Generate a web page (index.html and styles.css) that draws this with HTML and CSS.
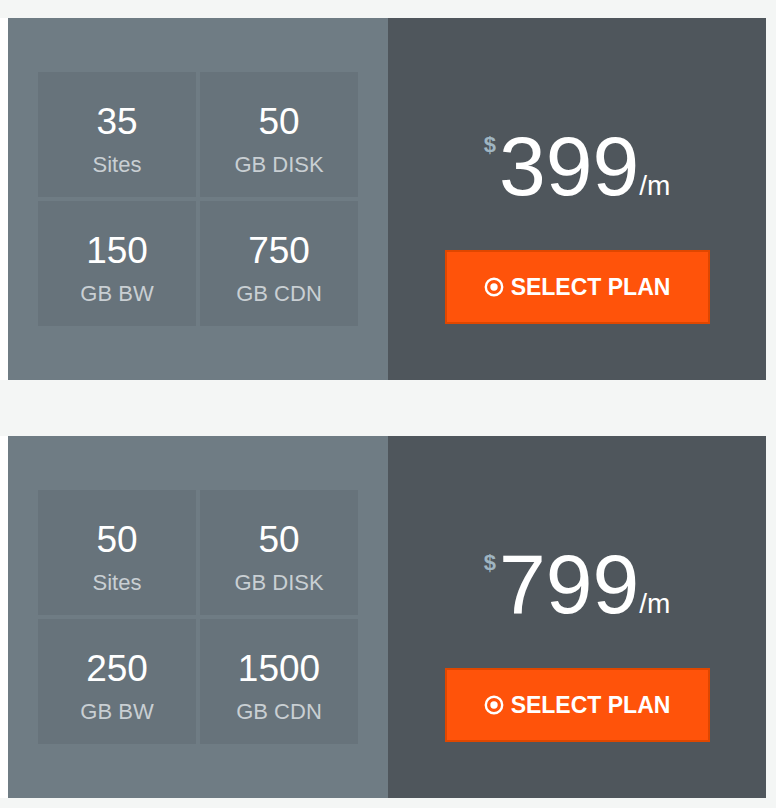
FILE: index.html
```html
<!DOCTYPE html>
<html>
<head>
<meta charset="utf-8">
<link rel="stylesheet" href="styles.css">
</head>
<body>
<div class="plans">
  <div class="plan">
    <div class="specs">
      <div class="cell"><div class="num">35</div><div class="label">Sites</div></div>
      <div class="cell"><div class="num">50</div><div class="label">GB DISK</div></div>
      <div class="cell"><div class="num">150</div><div class="label">GB BW</div></div>
      <div class="cell"><div class="num">750</div><div class="label">GB CDN</div></div>
    </div>
    <div class="pricing">
      <div class="price"><span class="cur">$</span>399<span class="per">/m</span></div>
      <button class="select"><svg class="ico" viewBox="0 0 20 20" width="20" height="20"><circle cx="10" cy="10" r="8.2" fill="none" stroke="#fff" stroke-width="2.4"/><circle cx="10" cy="10" r="3.7" fill="#fff"/></svg><span>SELECT PLAN</span></button>
    </div>
  </div>
  <div class="plan">
    <div class="specs">
      <div class="cell"><div class="num">50</div><div class="label">Sites</div></div>
      <div class="cell"><div class="num">50</div><div class="label">GB DISK</div></div>
      <div class="cell"><div class="num">250</div><div class="label">GB BW</div></div>
      <div class="cell"><div class="num">1500</div><div class="label">GB CDN</div></div>
    </div>
    <div class="pricing">
      <div class="price"><span class="cur">$</span>799<span class="per">/m</span></div>
      <button class="select"><svg class="ico" viewBox="0 0 20 20" width="20" height="20"><circle cx="10" cy="10" r="8.2" fill="none" stroke="#fff" stroke-width="2.4"/><circle cx="10" cy="10" r="3.7" fill="#fff"/></svg><span>SELECT PLAN</span></button>
    </div>
  </div>
</div>
</body>
</html>
```
FILE: styles.css
```css
html, body {
  margin: 0;
  padding: 0;
}
body {
  background: #f4f6f5;
  font-family: "Liberation Sans", Arial, Helvetica, sans-serif;
  height: 808px;
  overflow: hidden;
}
.plans {
  display: flex;
  flex-direction: column;
  gap: 56px;
  padding-top: 18px;
}
.plan {
  display: flex;
  width: 758px;
  height: 362px;
  padding-left: 8px;
  background: #ffffff;
}
.specs {
  width: 320px;
  padding: 54px 30px;
  background: #6f7c84;
  display: grid;
  grid-template-columns: 158px 158px;
  grid-template-rows: 125px 125px;
  gap: 4px;
}
.cell {
  background: #67737b;
  text-align: center;
  padding-top: 30px;
  box-sizing: border-box;
}
.num {
  color: #ffffff;
  font-size: 37px;
  line-height: 40px;
}
.label {
  color: #c9cfd3;
  font-size: 22px;
  line-height: 26px;
  margin-top: 10px;
}
.pricing {
  flex: 1;
  background: #4f565c;
  display: flex;
  flex-direction: column;
  align-items: center;
  padding-top: 106px;
}
.price {
  color: #ffffff;
  font-size: 84px;
  line-height: 84px;
  height: 84px;
  white-space: nowrap;
}
.cur {
  display: inline-block;
  vertical-align: top;
  font-size: 22px;
  line-height: 22px;
  font-weight: bold;
  color: #9fb5c2;
  margin-top: 10px;
  margin-right: 3px;
}
.per {
  font-size: 28px;
}
.select {
  margin: 42px 0 0 0;
  width: 265px;
  height: 74px;
  box-sizing: border-box;
  background: #ff530a;
  border: 2px solid #e04700;
  color: #ffffff;
  font-family: "Liberation Sans", Arial, Helvetica, sans-serif;
  font-weight: bold;
  font-size: 23px;
  display: flex;
  align-items: center;
  justify-content: center;
  gap: 7px;
  padding: 0;
}
.ico {
  display: block;
  flex: none;
  width: 20px;
  height: 20px;
}
```
